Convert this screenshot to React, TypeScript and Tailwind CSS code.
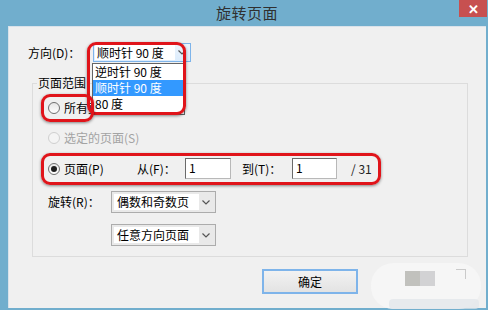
import React from 'react'

const Radio = ({ checked = false, disabled = false }: { checked?: boolean; disabled?: boolean }) => (
  <span
    className={
      disabled
        ? 'w-[12px] h-[12px] rounded-full border border-[#cfcfcf] bg-[#f4f4f4] flex items-center justify-center shrink-0'
        : 'w-[12px] h-[12px] rounded-full border border-[#6f6f6f] bg-linear-to-b from-[#e6e6e6] to-white flex items-center justify-center shrink-0'
    }
  >
    {checked && <span className="w-[6px] h-[6px] rounded-full bg-[#1c1c1c]" />}
  </span>
)

const Chevron = () => (
  <svg width="8" height="5" viewBox="0 0 8 5" className="shrink-0">
    <path d="M0.5 0.5 L4 4 L7.5 0.5" fill="none" stroke="#555" strokeWidth="1.2" />
  </svg>
)

const Select = ({ text }: { text: string }) => (
  <div className="w-[105px] h-[22px] border border-[#acacac] bg-[#e9e9e9] flex items-center p-[2px]">
    <div className="w-[85px] h-full bg-white flex items-center pl-[3px] text-[12px] text-black">{text}</div>
    <div className="flex-1 flex justify-center">
      <Chevron />
    </div>
  </div>
)

const Input = ({ w }: { w: string }) => (
  <div className={`${w} h-[21px] bg-white border border-[#b8b8b8] border-t-[#6a6a6a] border-l-[#6a6a6a] pl-[3px] text-[12px] leading-[18px] text-black`}>
    1
  </div>
)

const RedBox = ({ cls }: { cls: string }) => (
  <div className={`absolute ${cls} border-[3px] border-[#e0141a] rounded-[9px] shadow-[0_1px_3px_rgba(0,0,0,0.45)] pointer-events-none`} />
)

export default function App() {
  return (
    <div className="w-[488px] h-[310px] bg-[#71aecd] flex flex-col font-['Noto_Sans_CJK_SC','Noto_Sans',sans-serif] overflow-hidden">
      {/* title bar */}
      <div className="h-[26px] relative flex items-center justify-center shrink-0">
        <span className="text-[15px] text-[#303030] tracking-[0.5px] ml-[6px]">旋转页面</span>
        <div className="absolute right-[1px] top-0 w-[28px] h-[17px] bg-[#c75050] flex items-center justify-center text-white text-[13px] font-bold leading-none">
          ✕
        </div>
      </div>

      {/* client area */}
      <div className="relative flex-1 ml-[8px] mr-[2px] mb-[2px] bg-[#f0f0f0] border-l border-t border-[#d9e2ea] text-[12px] text-black">
        {/* direction row */}
        <div className="flex items-center pt-[16px] pl-[19px]">
          <span className="w-[65px]">方向(D)：</span>
          <div className="w-[98px] h-[19px] border border-[#7eb4ea] bg-linear-to-b from-[#ecf4fc] to-[#dcecfc] flex items-center p-[1px]">
            <div className="w-[80px] h-full bg-white flex items-center pl-[2px]">顺时针 90 度</div>
            <div className="flex-1 flex justify-center">
              <Chevron />
            </div>
          </div>
        </div>

        {/* page range group */}
        <div className="relative ml-[23px] mt-[21px] w-[436px] h-[174px] border border-[#dcdcdc] flex flex-col">
          <span className="absolute -top-[9px] left-[4px] px-[1px] bg-[#f0f0f0] leading-[16px]">页面范围</span>

          <div className="flex items-center h-[16px] mt-[16px] pl-[15px] gap-[4px]">
            <Radio />
            <span>所有页面</span>
          </div>

          <div className="flex items-center h-[16px] mt-[14px] pl-[15px] gap-[4px] text-[#a3a3a3]">
            <Radio disabled />
            <span>选定的页面(S)</span>
          </div>

          <div className="flex items-center h-[21px] mt-[12px] pl-[15px]">
            <Radio checked />
            <span className="ml-[4px] w-[73px]">页面(P)</span>
            <span className="w-[48px]">从(F)：</span>
            <Input w="w-[46px]" />
            <span className="ml-[11px] w-[50px]">到(T)：</span>
            <Input w="w-[45px]" />
            <span className="ml-[14px] text-[#222]">/ 31</span>
          </div>

          <div className="flex items-center h-[22px] mt-[12px] pl-[15px]">
            <span className="w-[63px]">旋转(R)：</span>
            <Select text="偶数和奇数页" />
          </div>

          <div className="flex items-center h-[22px] mt-[11px] pl-[78px]">
            <Select text="任意方向页面" />
          </div>
        </div>

        {/* buttons */}
        <div className="flex items-center mt-[12px] pl-[253px]">
          <div className="w-[96px] h-[25px] border-2 border-[#7eb4ea] bg-linear-to-b from-[#f2f2f2] to-[#e3e3e3] flex items-center justify-center text-[12px] text-black">
            确定
          </div>
        </div>

        {/* blurred watermark */}
        <div className="absolute left-[362px] top-[236px] w-[110px] h-[46px] rounded-[22px] bg-[#f6f6f6] opacity-90" />
        <div className="absolute left-[396px] top-[244px] w-[15px] h-[15px] bg-[#c1c1bd]" />
        <div className="absolute left-[411px] top-[244px] w-[15px] h-[15px] bg-[#d2d2d4]" />
        <div className="absolute left-[447px] top-[242px] w-[10px] h-[10px] border-t border-r border-[#b8b8b8] opacity-70" />
        <div className="absolute left-[380px] top-[272px] w-[90px] h-[10px] bg-[#e1e6ea] opacity-70 rounded-[4px]" />

        {/* opened dropdown list */}
        <div className="absolute left-[83px] top-[36px] w-[93px] h-[52px] bg-white border border-[#646464] flex flex-col">
          <div className="h-[16px] leading-[16px] pl-[2px]">逆时针 90 度</div>
          <div className="h-[16px] leading-[16px] pl-[2px] bg-[#3399ff] text-white">顺时针 90 度</div>
          <div className="h-[16px] leading-[16px] pl-[2px]">80 度</div>
        </div>

        {/* red highlights */}
        <RedBox cls="left-[78px] top-[15px] w-[99px] h-[73px]" />
        <RedBox cls="left-[32px] top-[67px] w-[53px] h-[28px]" />
        <RedBox cls="left-[32px] top-[126px] w-[340px] h-[32px]" />
      </div>
    </div>
  )
}
